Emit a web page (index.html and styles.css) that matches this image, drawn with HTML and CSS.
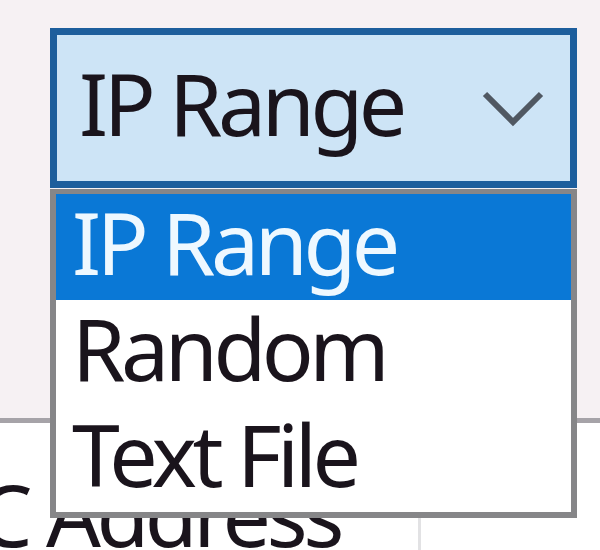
FILE: index.html
```html
<!DOCTYPE html>
<html>
<head>
<meta charset="utf-8">
<link rel="stylesheet" href="styles.css">
</head>
<body>
<div class="page">
  <div class="top">
    <div class="combo-wrap">
      <div class="combo">
        <span class="combo-text">IP Range</span>
        <svg class="chev" width="62" height="36" viewBox="0 0 62 36">
          <polyline points="3,3 31,31 59,3" fill="none" stroke="#505862" stroke-width="6"/>
        </svg>
      </div>
      <ul class="dropdown">
        <li class="item selected">IP Range</li>
        <li class="item">Random</li>
        <li class="item">Text File</li>
      </ul>
    </div>
  </div>
  <div class="table">
    <div class="thead">
      <div class="th th-mac">MAC Address</div>
      <div class="th th-next"></div>
    </div>
  </div>
</div>
</body>
</html>
```

FILE: styles.css
```css
html, body {
  margin: 0;
  padding: 0;
}
body {
  width: 600px;
  height: 550px;
  overflow: hidden;
  background: #f6f1f3;
  font-family: "Noto Sans", "Open Sans", sans-serif;
  color: #1a141c;
}
.page {
  width: 600px;
  height: 550px;
  display: flex;
  flex-direction: column;
}
.top {
  height: 423px;
  padding: 28px 0 0 50px;
  box-sizing: border-box;
  border-bottom: 5px solid #a6a3a8;
  background: #f6f1f3;
}
.combo-wrap {
  position: relative;
  width: 527px;
}
.combo {
  height: 160px;
  box-sizing: border-box;
  border: 7px solid #1d5e9c;
  background: #cde4f6;
  display: flex;
  align-items: center;
  justify-content: space-between;
  padding: 0 26px 0 22px;
}
.combo-text, .item, .th {
  font-size: 86px;
  letter-spacing: -4.5px;
  line-height: 1;
  white-space: nowrap;
}
.combo-text {
  margin-top: -10px;
}
.chev {
  display: block;
  margin-top: 2px;
}
.dropdown {
  position: absolute;
  left: 0;
  top: 161px;
  width: 527px;
  box-sizing: border-box;
  margin: 0;
  padding: 0;
  list-style: none;
  background: #ffffff;
  border: 6px solid #868688;
  border-top-width: 5px;
  z-index: 2;
}
.item {
  height: 106px;
  box-sizing: border-box;
  padding: 0 0 10px 16px;
  display: flex;
  align-items: center;
}
.selected {
  background: #0a78d6;
  color: #eef8ff;
}
.table {
  flex: 1;
  background: #ffffff;
  overflow: hidden;
}
.thead {
  display: flex;
  height: 100%;
}
.th {
  padding-top: 48px;
  box-sizing: border-box;
}
.th-mac {
  width: 562px;
  margin-left: -144px;
  flex: none;
  border-right: 3px solid #e2e2e4;
  box-sizing: content-box;
}
.th-next {
  flex: 1;
}
```
